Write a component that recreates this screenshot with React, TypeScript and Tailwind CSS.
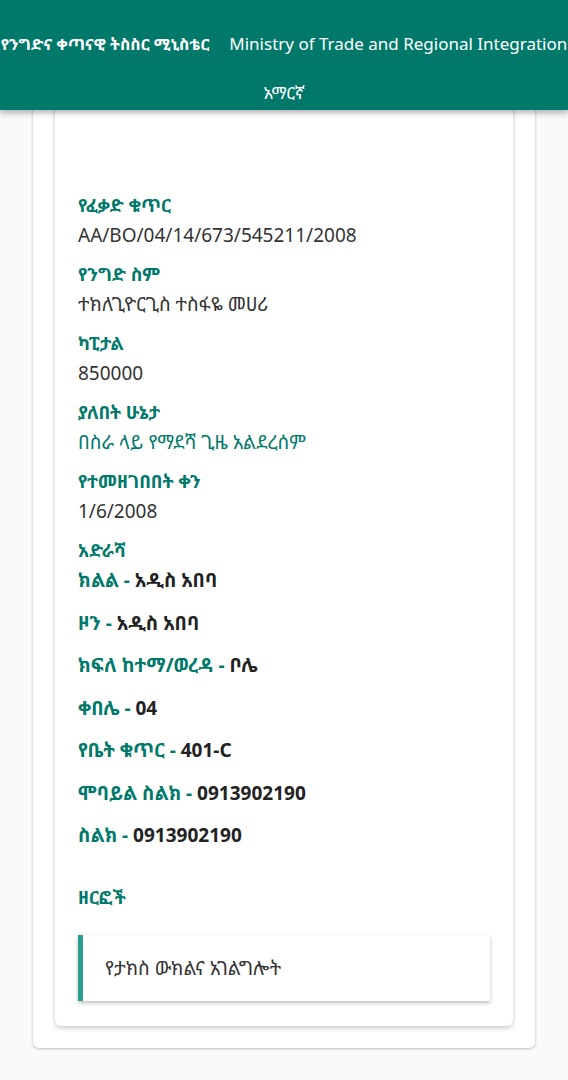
import React from 'react';

const fields = [
  { label: 'የፈቃድ ቁጥር', value: 'AA/BO/04/14/673/545211/2008' },
  { label: 'የንግድ ስም', value: 'ተክለጊዮርጊስ ተስፋዬ መሀሪ' },
  { label: 'ካፒታል', value: '850000' },
  { label: 'ያለበት ሁኔታ', value: 'በስራ ላይ የማደሻ ጊዜ አልደረሰም', status: true },
  { label: 'የተመዘገበበት ቀን', value: '1/6/2008' },
];

const address = [
  { label: 'ክልል', value: 'አዲስ አበባ' },
  { label: 'ዞን', value: 'አዲስ አበባ' },
  { label: 'ክፍለ ከተማ/ወረዳ', value: 'ቦሌ' },
  { label: 'ቀበሌ', value: '04' },
  { label: 'የቤት ቁጥር', value: '401-C' },
  { label: 'ሞባይል ስልክ', value: '0913902190' },
  { label: 'ስልክ', value: '0913902190' },
];

export default function App() {
  return (
    <div className="min-h-[1080px] bg-[#fafafa] text-[#333] font-['Noto_Sans','Noto_Sans_Ethiopic',sans-serif]">
      {/* Header */}
      <header className="relative z-10 h-[110px] bg-[#00796b] text-white shadow-[0_3px_6px_rgba(0,0,0,0.3)]">
        <div className="flex h-[88px] items-center justify-center gap-[20px]">
          <span className="text-[16px] font-bold">የንግድና ቀጣናዊ ትስስር ሚኒስቴር</span>
          <span className="text-[17px]">Ministry of Trade and Regional Integration</span>
        </div>
        <div className="-mt-[8px] text-center text-[17px]">አማርኛ</div>
      </header>

      {/* Outer card */}
      <div className="mx-[33px] -mt-[20px] rounded-b-[6px] bg-white px-[22px] pb-[22px] shadow-[0_1px_3px_rgba(0,0,0,0.25)]">
        {/* Inner card */}
        <div className="rounded-b-[6px] bg-white px-[23px] pt-[100px] pb-[25px] shadow-[0_2px_5px_rgba(0,0,0,0.22)]">
          <div className="flex flex-col gap-[9px]">
            {fields.map((f) => (
              <div key={f.label} className="flex flex-col">
                <span className="text-[18px] leading-[30px] font-bold text-[#00796b]">{f.label}</span>
                <span
                  className={`text-[19px] leading-[30px] ${f.status ? 'text-[#00796b]' : 'text-[#333]'}`}
                >
                  {f.value}
                </span>
              </div>
            ))}
          </div>

          <div className="mt-[9px] text-[18px] leading-[30px] font-bold text-[#00796b]">አድራሻ</div>
          <div className="flex flex-col gap-[12.5px]">
            {address.map((a) => (
              <div key={a.label} className="text-[19px] leading-[30px] font-bold">
                <span className="text-[#00796b]">{a.label} - </span>
                <span className="text-[#222]">{a.value}</span>
              </div>
            ))}
          </div>

          <div className="mt-[32px] text-[18px] leading-[30px] font-bold text-[#00796b]">ዘርፎች</div>

          <div className="mt-[23px] flex h-[66px] items-center border-l-[5px] border-[#2a9d8f] bg-white pl-[22px] shadow-[0_2px_4px_rgba(0,0,0,0.25)]">
            <span className="text-[19px] text-[#333]">የታክስ ውክልና አገልግሎት</span>
          </div>
        </div>
      </div>
    </div>
  );
}
